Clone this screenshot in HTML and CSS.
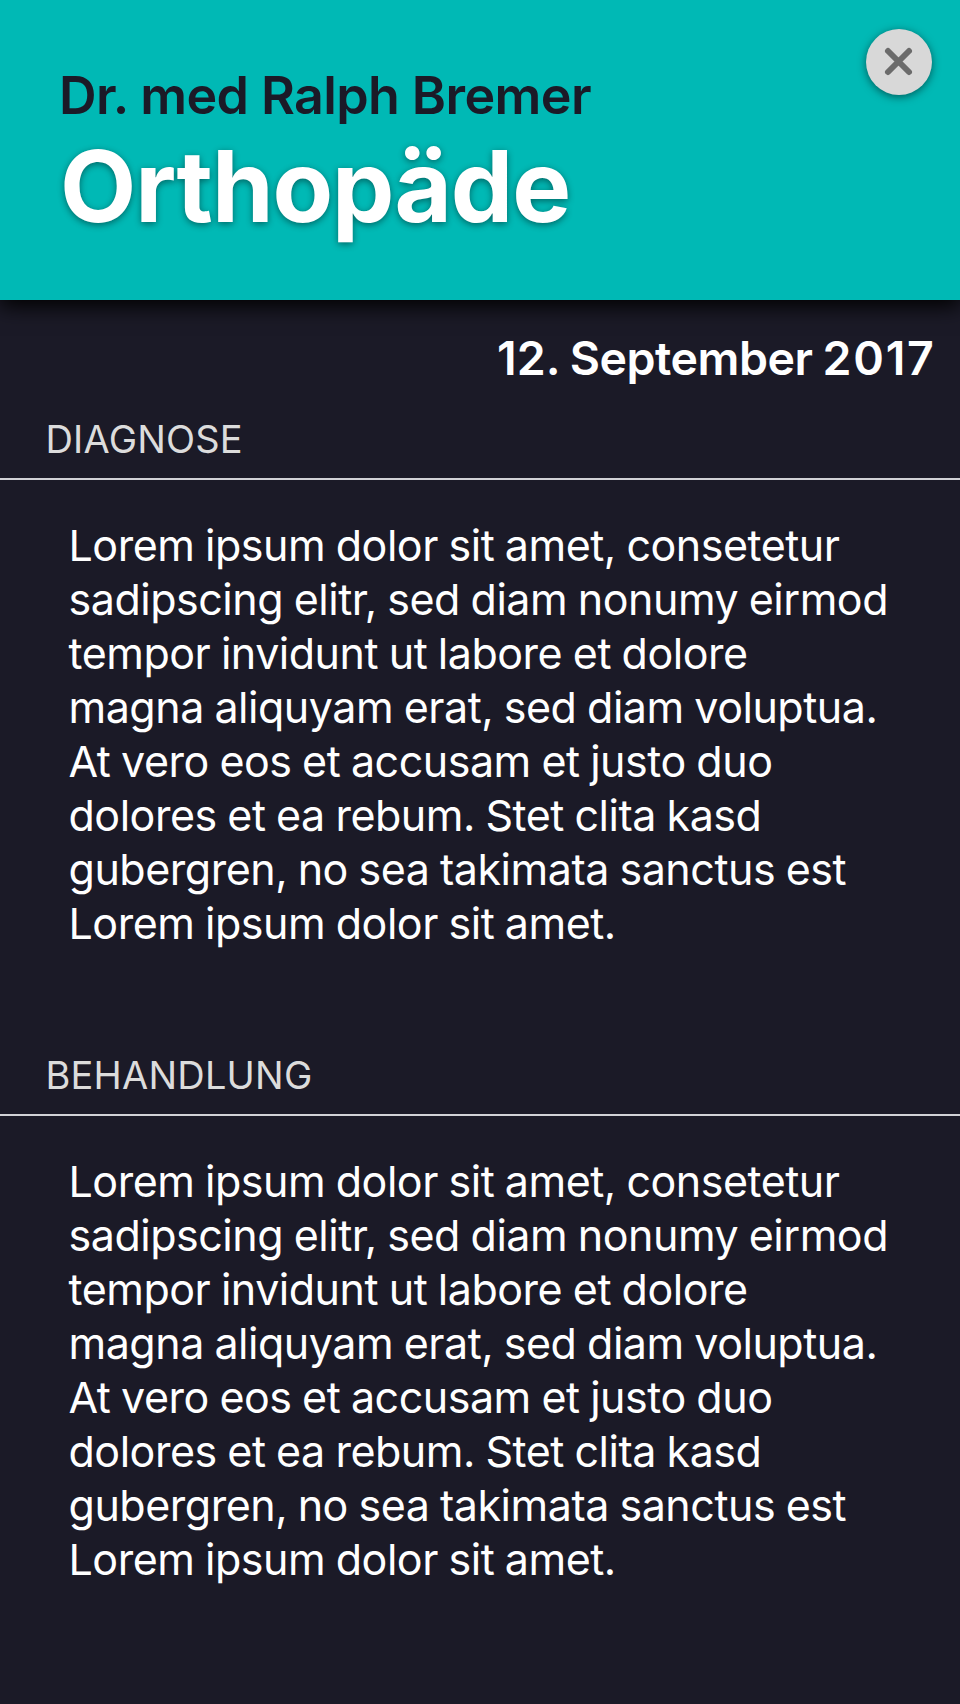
FILE: index.html
```html
<!DOCTYPE html>
<html lang="de">
<head>
<meta charset="utf-8">
<title>Orthopäde</title>
<link rel="stylesheet" href="styles.css">
</head>
<body>
<header class="header">
  <div class="doctor">Dr. med Ralph Bremer</div>
  <h1 class="title">Orthopäde</h1>
  <button class="close" aria-label="Schließen"><svg viewBox="0 0 66 66"><path d="M22 22L43 43M43 22L22 43"/></svg></button>
</header>
<main>
  <div class="date">12. <span class="month">September</span> <span class="year">2017</span></div>
  <section class="section">
    <h2 class="label">DIAGNOSE</h2>
    <p class="text">Lorem ipsum dolor sit amet, consetetur<br>sadipscing elitr, sed diam nonumy eirmod<br>tempor invidunt ut labore et dolore<br>magna aliquyam erat, sed diam voluptua.<br>At vero eos et accusam et justo duo<br>dolores et ea rebum. Stet clita kasd<br>gubergren, no sea takimata sanctus est<br>Lorem ipsum dolor sit amet.</p>
  </section>
  <section class="section">
    <h2 class="label">BEHANDLUNG</h2>
    <p class="text">Lorem ipsum dolor sit amet, consetetur<br>sadipscing elitr, sed diam nonumy eirmod<br>tempor invidunt ut labore et dolore<br>magna aliquyam erat, sed diam voluptua.<br>At vero eos et accusam et justo duo<br>dolores et ea rebum. Stet clita kasd<br>gubergren, no sea takimata sanctus est<br>Lorem ipsum dolor sit amet.</p>
  </section>
</main>
</body>
</html>
```
FILE: styles.css
```css
* { box-sizing: border-box; margin: 0; padding: 0; }
body { background: #1b1a27; color: #fff; font-family: Inter, "Liberation Sans", sans-serif; height: 1704px; overflow: hidden; }
.header { position: relative; height: 300px; padding: 65px 59px 0; background: #00b9b5; box-shadow: 0 6px 20px #000; }
.doctor { font-size: 52px; line-height: 61px; font-weight: 600; letter-spacing: -.6px; color: #1b1a27; white-space: nowrap; }
.title { padding-left: 1px; font-size: 99px; line-height: 121px; font-weight: 700; letter-spacing: -1.05px; text-shadow: 0 2px 7px rgba(0,0,0,.45); }
.close { position: absolute; right: 28.5px; top: 28.5px; width: 66px; height: 66px; border: 0; border-radius: 50%; background: #d8d8d8; box-shadow: 0 2px 8px rgba(0,0,0,.5); }
.close svg { display: block; width: 66px; height: 66px; fill: none; stroke: #6b6b6b; stroke-width: 6; stroke-linecap: round; }
.date { padding: 29px 24.5px 0; height: 112px; font-size: 46.5px; line-height: 58px; font-weight: 600; text-align: right; word-spacing: -1.5px; }
.month { letter-spacing: -.5px; }
.year { letter-spacing: 1.7px; }
.section { height: 636px; }
.label { height: 68px; padding-left: 45.5px; border-bottom: 2px solid #d2d2d6; color: #dcdcdc; font-size: 38px; line-height: 54px; font-weight: 400; letter-spacing: .2px; }
.text { padding: 38px 0 0 68.5px; font-size: 43px; line-height: 54px; letter-spacing: -.48px; word-spacing: -1px; white-space: nowrap; }
```
